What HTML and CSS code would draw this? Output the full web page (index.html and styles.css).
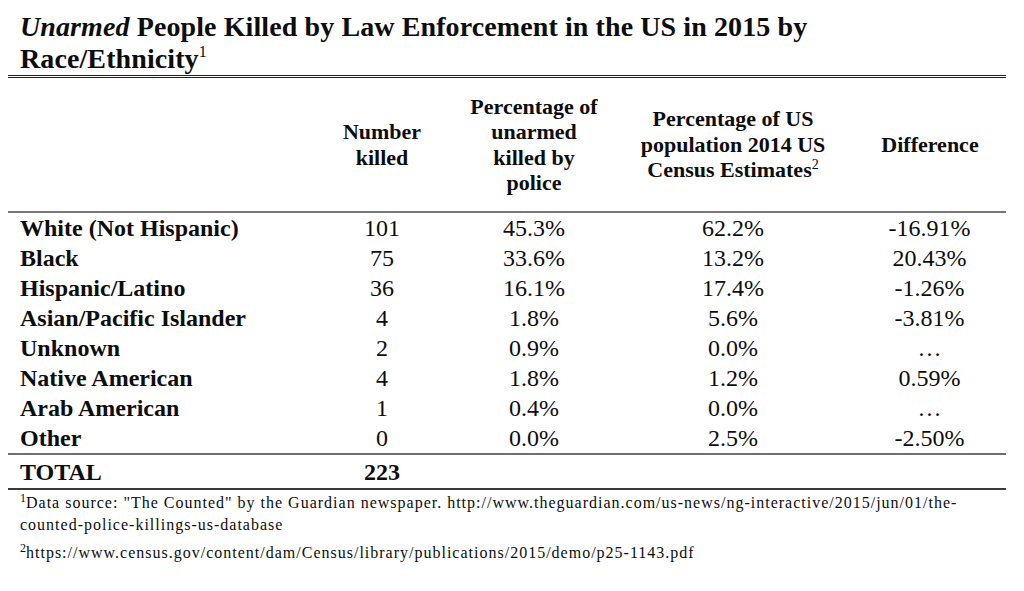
FILE: index.html
```html
<!DOCTYPE html>
<html lang="en">
<head>
<meta charset="utf-8">
<title>Unarmed People Killed by Law Enforcement in the US in 2015</title>
<link rel="stylesheet" href="styles.css">
</head>
<body>
<div class="page">
  <h1 class="title"><em>Unarmed</em> People Killed by Law Enforcement in the US in 2015 by<br>Race/Ethnicity<sup>1</sup></h1>
  <table class="data">
    <colgroup>
      <col class="c-name">
      <col class="c-num">
      <col class="c-pct">
      <col class="c-pop">
      <col class="c-diff">
    </colgroup>
    <thead>
      <tr>
        <th class="blank"></th>
        <th>Number<br>killed</th>
        <th>Percentage of<br>unarmed<br>killed by<br>police</th>
        <th>Percentage of US<br>population 2014 US<br>Census Estimates<sup>2</sup></th>
        <th class="diff">Difference</th>
      </tr>
    </thead>
    <tbody>
      <tr><th>White (Not Hispanic)</th><td>101</td><td>45.3%</td><td>62.2%</td><td class="diff">-16.91%</td></tr>
      <tr><th>Black</th><td>75</td><td>33.6%</td><td>13.2%</td><td class="diff">20.43%</td></tr>
      <tr><th>Hispanic/Latino</th><td>36</td><td>16.1%</td><td>17.4%</td><td class="diff">-1.26%</td></tr>
      <tr><th>Asian/Pacific Islander</th><td>4</td><td>1.8%</td><td>5.6%</td><td class="diff">-3.81%</td></tr>
      <tr><th>Unknown</th><td>2</td><td>0.9%</td><td>0.0%</td><td class="diff">…</td></tr>
      <tr><th>Native American</th><td>4</td><td>1.8%</td><td>1.2%</td><td class="diff">0.59%</td></tr>
      <tr><th>Arab American</th><td>1</td><td>0.4%</td><td>0.0%</td><td class="diff">…</td></tr>
      <tr><th>Other</th><td>0</td><td>0.0%</td><td>2.5%</td><td class="diff">-2.50%</td></tr>
    </tbody>
    <tfoot>
      <tr><th>TOTAL</th><td>223</td><td></td><td></td><td class="diff"></td></tr>
    </tfoot>
  </table>
  <div class="notes">
    <p><sup>1</sup>Data source: "The Counted" by the Guardian newspaper. http://www.theguardian.com/us-news/ng-interactive/2015/jun/01/the-<br>counted-police-killings-us-database</p>
    <p><sup>2</sup>https://www.census.gov/content/dam/Census/library/publications/2015/demo/p25-1143.pdf</p>
  </div>
</div>
</body>
</html>
```
FILE: styles.css
```css
html, body {
  margin: 0;
  padding: 0;
  background: #ffffff;
}

body {
  font-family: "Liberation Serif", "Times New Roman", serif;
  color: #0d0d0d;
}

.page {
  width: 998px;
  margin-left: 8px;
}

.title {
  margin: 11px 0 0 0;
  padding: 0 0 0 12px;
  font-size: 28px;
  line-height: 32px;
  letter-spacing: 0.1px;
  font-weight: bold;
  white-space: nowrap;
  border-bottom: 3px double #222222;
}

.title em {
  font-style: italic;
}

.title sup {
  font-size: 16px;
  font-weight: normal;
  letter-spacing: 0;
  vertical-align: 11px;
  line-height: 0;
}

.data {
  width: 998px;
  border-collapse: collapse;
  table-layout: fixed;
}

.c-name { width: 312px; }
.c-num { width: 124px; }
.c-pct { width: 180px; }
.c-pop { width: 218px; }
.c-diff { width: 164px; }

.data thead th {
  height: 133px;
  padding: 0;
  font-size: 22px;
  line-height: 25.5px;
  font-weight: bold;
  text-align: center;
  vertical-align: middle;
  border-bottom: 2px solid #777777;
}

.data thead sup {
  font-size: 14px;
  font-weight: normal;
  vertical-align: 8px;
  line-height: 0;
}

.data tbody th,
.data tfoot th {
  text-align: left;
  padding: 0 0 0 12px;
  font-weight: bold;
}

.data tbody th,
.data tbody td {
  height: 30px;
  font-size: 24px;
  line-height: 30px;
  padding-top: 0;
  padding-bottom: 0;
}

.data td {
  text-align: center;
  font-weight: normal;
}

.data .diff {
  padding-left: 12px;
}

.data tfoot th,
.data tfoot td {
  height: 32px;
  font-size: 24px;
  line-height: 32px;
  font-weight: bold;
  border-top: 2px solid #707070;
  border-bottom: 2px solid #3a3a3a;
  padding-top: 1px;
  padding-bottom: 0;
}

.notes {
  padding: 2px 0 0 12px;
  font-size: 16px;
  line-height: 22px;
  letter-spacing: 1px;
}

.notes p {
  margin: 0 0 6px 0;
}

.notes sup {
  font-size: 12px;
  letter-spacing: 0;
  vertical-align: 6px;
  line-height: 0;
}
```
